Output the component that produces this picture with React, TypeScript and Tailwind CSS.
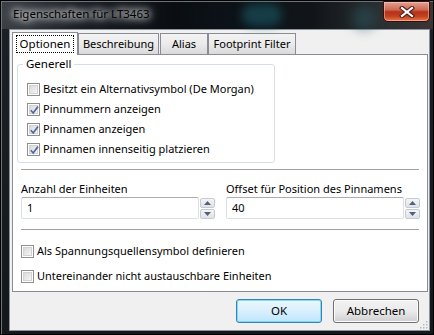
import React from 'react';

const font = { fontFamily: '"Noto Sans", "Liberation Sans", sans-serif' };

function CheckBox({ checked, label }: { checked?: boolean; label: string }) {
  return (
    <div className="flex items-center">
      <div className="w-[13px] h-[13px] border border-[#8e8f8f] bg-white p-[1px] shrink-0">
        <div className="relative w-full h-full border border-[#d2d2d2] bg-gradient-to-br from-[#d9d9d9] to-[#f6f6f6]">
          {checked && (
            <svg className="absolute -left-[1px] -top-[1px]" width="11" height="11" viewBox="0 0 11 11">
              <path d="M1.8 5.2 L4.2 8 L9 1.5" fill="none" stroke="#4f64a0" strokeWidth="1.7" />
            </svg>
          )}
        </div>
      </div>
      <span className="ml-[3px] text-[11px] leading-[16px] text-black whitespace-nowrap">{label}</span>
    </div>
  );
}

function Spinner() {
  return (
    <div className="flex flex-col gap-[1px] w-[15px] ml-[1px] pt-[1px]">
      {[0, 1].map((i) => (
        <div
          key={i}
          className="h-[10px] border border-[#c5cbd2] rounded-[2px] bg-gradient-to-b from-[#f5f5f5] to-[#e2e2e2] flex items-center justify-center"
        >
          <svg width="7" height="4" viewBox="0 0 7 4">
            <path d={i === 0 ? 'M0 4 L3.5 0 L7 4 Z' : 'M0 0 L3.5 4 L7 0 Z'} fill="#4d6185" />
          </svg>
        </div>
      ))}
    </div>
  );
}

function NumberField({ label, value }: { label: string; value: string }) {
  return (
    <div className="flex flex-col w-[194px]">
      <span className="text-[11px] leading-[16px] text-black whitespace-nowrap">{label}</span>
      <div className="flex">
        <div className="w-[178px] h-[22px] rounded-[2px] border border-[#dbdfe6] border-t-[#abadb3] bg-white flex items-center pl-[5px] text-[11px] text-black">
          {value}
        </div>
        <Spinner />
      </div>
    </div>
  );
}

export default function App() {
  const tabs = [
    { name: 'Beschreibung', w: 'w-[81px]', ml: 'ml-0' },
    { name: 'Alias', w: 'w-[48px]', ml: 'ml-[1px]' },
    { name: 'Footprint Filter', w: 'w-[88px]', ml: 'ml-0' },
  ];

  return (
    <div className="w-[434px] h-[335px] overflow-hidden bg-black p-[1px]" style={font}>
      <div className="w-full h-full border-t border-l border-[#6e7379] bg-gradient-to-b from-[#1d2127] to-[#14171b] flex flex-col">
        {/* Title bar */}
        <div className="h-[27px] flex items-start relative bg-[linear-gradient(90deg,#3b4046_0%,#1a1e24_18%,#0a0e13_40%,#0c1318_55%,#111519_72%,#2a2e31_88%,#3c3435_100%)]">
          <div className="absolute left-[240px] top-[2px] w-[40px] h-[22px] rounded-full bg-[#1c5a66] opacity-60 blur-[5px]" />
          <div className="absolute left-[350px] top-[4px] w-[24px] h-[24px] rounded-full bg-[#2b5a62] opacity-50 blur-[6px]" />
          <span className="relative ml-[9px] mt-[4px] text-[11.5px] leading-[16px] text-black px-[2px] [text-shadow:0_0_6px_#fff,0_0_10px_#fff,0_0_14px_#ddd]">
            Eigenschaften für LT3463
          </span>
          <div className="relative ml-auto mr-[3px] -mt-[1px] w-[47px] h-[21px] rounded-b-[5px] border border-[#3a0f0a] bg-[linear-gradient(180deg,#e2a294_0%,#d06a55_40%,#b6301a_52%,#c2401f_75%,#e87a4e_100%)] flex items-center justify-center shadow-[inset_0_0_0_1px_rgba(255,220,210,0.45)]">
            <svg width="16" height="12" viewBox="0 0 16 12">
              <path d="M3 2 L13 10 M13 2 L3 10" stroke="#4a1c14" strokeWidth="4.2" strokeLinecap="square" />
              <path d="M3 2 L13 10 M13 2 L3 10" stroke="#ffffff" strokeWidth="2.2" strokeLinecap="square" />
            </svg>
          </div>
        </div>

        {/* Client area */}
        <div className="ml-[7px] mr-[3px] h-[302px] border border-[#8b949c] bg-[#f0f0f0] flex flex-col">
          {/* Tabs */}
          <div className="flex items-end h-[23px] pl-[2px] mt-[1px]">
            <div className="w-[66px] h-[23px] -mb-[1px] relative z-10 border border-b-0 border-[#898c95] bg-white flex items-center justify-center">
              <span className="text-[11.5px] leading-[16px] text-black outline-1 outline-dotted outline-black px-[3px] py-[0px]">
                Optionen
              </span>
            </div>
            {tabs.map((t) => (
              <div
                key={t.name}
                className={`${t.w} ${t.ml} h-[21px] border border-b-0 border-[#898c95] bg-gradient-to-b from-[#f3f3f3] via-[#ebebeb] to-[#d9d9d9] flex items-center justify-center text-[11px] leading-[16px] text-black whitespace-nowrap`}
              >
                {t.name}
              </div>
            ))}
          </div>

          {/* Tab panel */}
          <div className="ml-[2px] w-[416px] h-[238px] border border-[#898c95] bg-white flex flex-col">
            <fieldset className="ml-[4px] mt-[1px] w-[258px] border border-[#d5dfe5] rounded-[3px] pb-[3px]">
              <legend className="ml-[5px] px-[3px] text-[11.5px] leading-[16px] text-black">Generell</legend>
              <div className="pl-[9px] pt-[7px] flex flex-col">
                <div className="h-[20px] flex items-center">
                  <CheckBox label="Besitzt ein Alternativsymbol (De Morgan)" />
                </div>
                <div className="h-[20px] flex items-center">
                  <CheckBox checked label="Pinnummern anzeigen" />
                </div>
                <div className="h-[20px] flex items-center">
                  <CheckBox checked label="Pinnamen anzeigen" />
                </div>
                <div className="h-[20px] flex items-center">
                  <CheckBox checked label="Pinnamen innenseitig platzieren" />
                </div>
              </div>
            </fieldset>

            <div className="mx-[8px] mt-[6px] h-px bg-[#a0a0a0]" />

            <div className="mx-[8px] mt-[11px] flex gap-[11px]">
              <NumberField label="Anzahl der Einheiten" value="1" />
              <NumberField label="Offset für Position des Pinnamens" value="40" />
            </div>

            <div className="mx-[8px] mt-[10px] h-px bg-[#a0a0a0]" />

            <div className="ml-[8px] mt-[13px] flex flex-col gap-[9px]">
              <div className="h-[16px] flex items-center">
                <CheckBox label="Als Spannungsquellensymbol definieren" />
              </div>
              <div className="h-[16px] flex items-center">
                <CheckBox label="Untereinander nicht austauschbare Einheiten" />
              </div>
            </div>
          </div>

          {/* Buttons */}
          <div className="flex justify-end gap-[11px] pr-[10px] mt-[7px] relative">
            <button className="w-[86px] h-[24px] rounded-[3px] border border-[#3c7fb1] bg-gradient-to-b from-[#eaf6fd] via-[#d9f0fc] to-[#bee6fd] shadow-[inset_0_0_0_1px_#7ddcf9] text-[11.5px] text-black">
              OK
            </button>
            <button className="w-[86px] h-[24px] rounded-[3px] border border-[#707070] bg-gradient-to-b from-[#f2f2f2] via-[#ebebeb] to-[#cfcfcf] shadow-[inset_0_0_0_1px_#fcfcfc] text-[11.5px] text-black">
              Abbrechen
            </button>
            <svg className="absolute right-[1px] bottom-[-6px]" width="9" height="9" viewBox="0 0 9 9">
              {[
                [7, 1],
                [4, 4],
                [7, 4],
                [1, 7],
                [4, 7],
                [7, 7],
              ].map(([x, y], i) => (
                <rect key={i} x={x} y={y} width="1.5" height="1.5" fill="#b8b8b8" />
              ))}
            </svg>
          </div>
        </div>
      </div>
    </div>
  );
}
